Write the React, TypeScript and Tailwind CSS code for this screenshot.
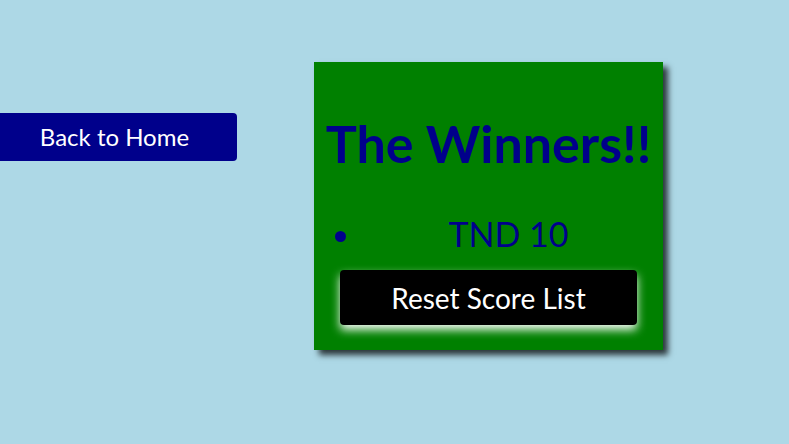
import React from 'react';

const App = () => {
  return (
    <div className="min-h-screen w-full overflow-hidden bg-[#add8e6] font-['Lato',sans-serif]">
      <div className="flex items-start">
        <button className="-ml-[8px] mt-[113px] h-[48px] w-[245px] shrink-0 rounded-[4px] bg-[#00008b] text-[24px] text-white">
          Back to Home
        </button>

        <div className="ml-[77px] mt-[62px] flex w-[349px] flex-col bg-[#008000] px-[26px] pb-[25px] pt-[51px] shadow-[5px_5px_6px_rgba(0,0,0,0.75)]">
          <h1 className="-mx-[20px] whitespace-nowrap text-center text-[52px] font-bold leading-[60px] text-[#00008b]">
            The Winners!!
          </h1>
          <ul className="mt-[41px] list-disc pl-[24px] text-[#00008b]">
            <li className="pl-[16px] text-center text-[34px] leading-[40px]">TND 10</li>
          </ul>
          <button className="mt-[16px] h-[55px] w-full rounded-[4px] bg-black text-[28px] text-white shadow-[0_5px_10px_rgba(255,255,255,0.95)]">
            Reset Score List
          </button>
        </div>
      </div>
    </div>
  );
};

export default App;
